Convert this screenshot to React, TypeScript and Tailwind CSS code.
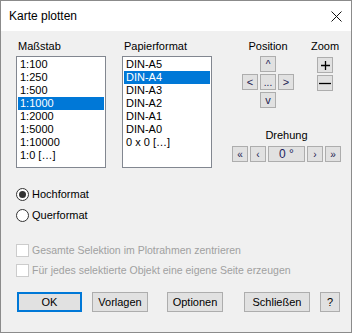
import React from 'react';

const scales = ['1:100', '1:250', '1:500', '1:1000', '1:2000', '1:5000', '1:10000', '1:0 […]'];
const papers = ['DIN-A5', 'DIN-A4', 'DIN-A3', 'DIN-A2', 'DIN-A1', 'DIN-A0', '0 x 0 […]'];

const ListBox: React.FC<{ label: string; items: string[]; selected: number; className?: string }> = ({
    label,
    items,
    selected,
    className = '',
}) => (
    <div className={`flex w-[90px] flex-col ${className}`}>
        <div className="mb-[3px] h-[13px] pl-[2px] leading-[13px]">{label}</div>
        <div className="h-[112px] border border-[#828790] bg-white px-[1px] pt-[1px]">
            {items.map((it, i) => (
                <div
                    key={it}
                    className={`h-[13px] whitespace-nowrap pl-[2px] leading-[13px] ${
                        i === selected ? 'bg-[#0078d7] text-white' : 'text-black'
                    }`}
                >
                    {it}
                </div>
            ))}
        </div>
    </div>
);

const Btn: React.FC<{ className?: string; children?: React.ReactNode }> = ({ className = '', children }) => (
    <div className={`flex items-center justify-center border border-[#adadad] bg-[#e1e1e1] ${className}`}>
        {children}
    </div>
);

const Radio: React.FC<{ checked?: boolean; label: string; className?: string }> = ({ checked, label, className = '' }) => (
    <div className={`flex h-[16px] items-center ${className}`}>
        <div className="flex h-[13px] w-[13px] items-center justify-center rounded-full border border-[#333333] bg-white">
            {checked && <div className="h-[7px] w-[7px] rounded-full bg-[#333333]" />}
        </div>
        <span className="ml-[3px] leading-[13px]">{label}</span>
    </div>
);

const Check: React.FC<{ label: string; className?: string }> = ({ label, className = '' }) => (
    <div className={`flex h-[16px] items-center ${className}`}>
        <div className="h-[13px] w-[13px] border border-[#cccccc] bg-white" />
        <span className="ml-[3px] whitespace-nowrap text-[10.5px] leading-[13px] text-[#a0a0a0]">{label}</span>
    </div>
);

export default function App() {
    return (
        <div className="flex h-[333px] w-[352px] flex-col border border-[#8b8b8b] bg-[#f0f0f0] font-['Liberation_Sans',Arial,sans-serif] text-[11px] text-black">
            {/* Title bar */}
            <div className="flex h-[30px] shrink-0 items-center justify-between bg-white pl-[8px] pr-[9px]">
                <span className="text-[12px]">Karte plotten</span>
                <svg width="11" height="11" viewBox="0 0 11 11" className="mt-[1px]">
                    <path d="M0.5 0.5 L10.5 10.5 M10.5 0.5 L0.5 10.5" stroke="#111" strokeWidth="1" />
                </svg>
            </div>

            {/* Body */}
            <div className="flex flex-col pl-[15px] pt-[9px]">
                <div className="flex">
                    <ListBox label="Maßstab" items={scales} selected={3} />
                    <ListBox label="Papierformat" items={papers} selected={1} className="ml-[16px]" />

                    {/* Position / Zoom / Drehung */}
                    <div className="ml-[20px] flex w-[109px] flex-col">
                        <div className="flex">
                            <div className="ml-[10px] flex w-[52px] flex-col items-center">
                                <div className="mb-[3px] h-[13px] whitespace-nowrap leading-[13px]">Position</div>
                                <div className="grid grid-cols-[16px_16px_16px] grid-rows-[16px_16px_16px] gap-[2px]">
                                    <div />
                                    <Btn className="text-[10px] text-[#202050]">^</Btn>
                                    <div />
                                    <Btn className="text-[11px] text-[#202050]">&lt;</Btn>
                                    <Btn className="text-[10px] text-[#202050]">...</Btn>
                                    <Btn className="text-[11px] text-[#202050]">&gt;</Btn>
                                    <div />
                                    <Btn className="text-[11px] text-[#202050]">v</Btn>
                                    <div />
                                </div>
                            </div>
                            <div className="ml-[23px] flex w-[16px] flex-col items-center">
                                <div className="mb-[4px] h-[13px] whitespace-nowrap leading-[13px]">Zoom</div>
                                <Btn className="h-[16px] w-[16px]">
                                    <svg width="9" height="9" viewBox="0 0 9 9">
                                        <path d="M4.5 0 V9 M0 4.5 H9" stroke="#000" strokeWidth="1.3" />
                                    </svg>
                                </Btn>
                                <Btn className="mt-[2px] h-[16px] w-[16px]">
                                    <svg width="12" height="3" viewBox="0 0 12 3">
                                        <path d="M0 1.5 H12" stroke="#000" strokeWidth="1.3" />
                                    </svg>
                                </Btn>
                            </div>
                        </div>

                        <div className="mt-[21px] flex flex-col items-center">
                            <div className="mb-[4px] h-[13px] whitespace-nowrap leading-[13px]">Drehung</div>
                            <div className="flex h-[16px] gap-[2px]">
                                <Btn className="w-[16px] text-[10px] text-[#202050]">«</Btn>
                                <Btn className="w-[16px] text-[10px] text-[#202050]">‹</Btn>
                                <Btn className="w-[37px] text-[12px] text-[#1c1c5c]">0 °</Btn>
                                <Btn className="w-[16px] text-[10px] text-[#202050]">›</Btn>
                                <Btn className="w-[16px] text-[10px] text-[#202050]">»</Btn>
                            </div>
                        </div>
                    </div>
                </div>

                {/* Orientation */}
                <Radio checked label="Hochformat" className="mt-[18px]" />
                <Radio label="Querformat" className="mt-[5px]" />

                {/* Options */}
                <Check label="Gesamte Selektion im Plotrahmen zentrieren" className="mt-[19px]" />
                <Check label="Für jedes selektierte Objekt eine eigene Seite erzeugen" className="mt-[4px]" />

                {/* Buttons */}
                <div className="mt-[14px] flex h-[20px] items-stretch pl-[1px]">
                    <div className="flex w-[65px] items-center justify-center border-2 border-[#0078d7] bg-[#e1e1e1]">
                        OK
                    </div>
                    <Btn className="ml-[10px] w-[56px]">Vorlagen</Btn>
                    <Btn className="ml-[19px] w-[56px]">Optionen</Btn>
                    <Btn className="ml-[21px] w-[66px]">Schließen</Btn>
                    <Btn className="ml-[10px] w-[20px]">?</Btn>
                </div>
            </div>
        </div>
    );
}
